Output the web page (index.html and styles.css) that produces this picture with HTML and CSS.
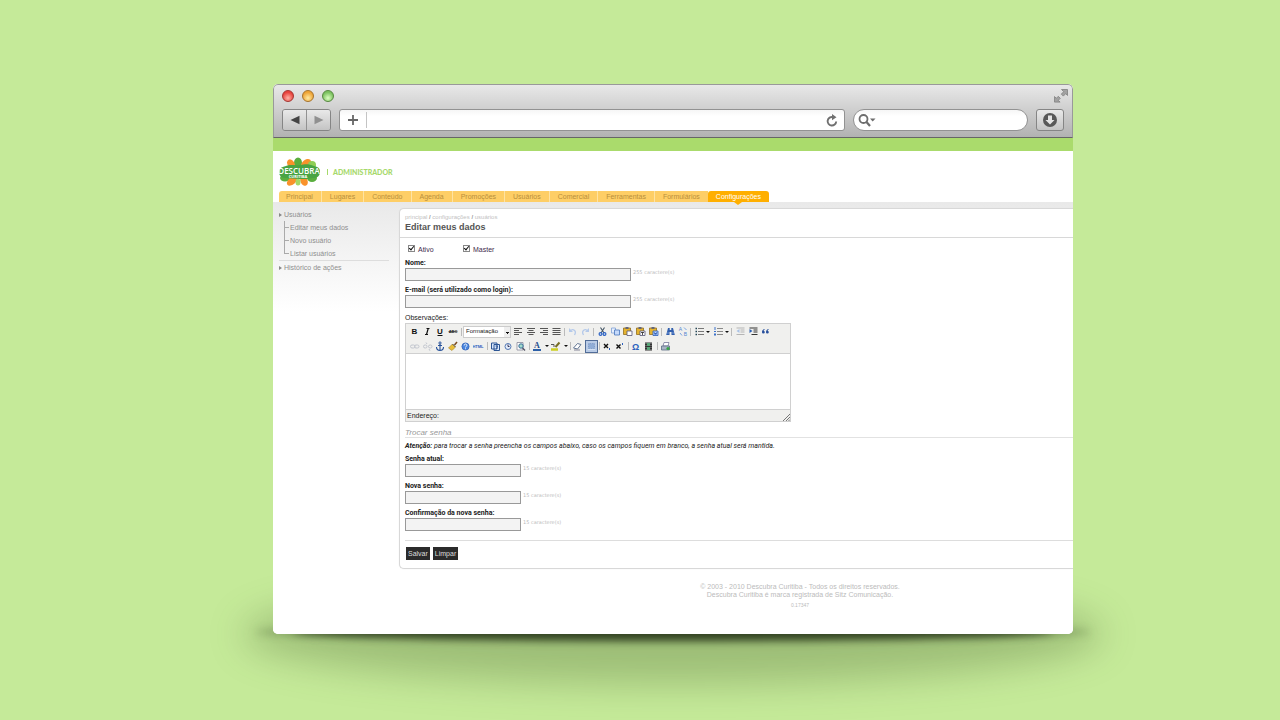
FILE: index.html
```html
<!DOCTYPE html>
<html lang="pt-BR">
<head>
<meta charset="utf-8">
<title>Descubra Curitiba - Administrador</title>
<link rel="stylesheet" href="styles.css">
</head>
<body>
<div class="stage">
<div class="shadow shadow-soft"></div>
<div class="shadow shadow-mid"></div>
<div class="shadow shadow-edge"></div>
<div class="window">
  <div class="chrome">
    <div class="titlebar">
      <span class="light red"></span><span class="light amber"></span><span class="light green"></span>
      <svg class="expand" width="16" height="16" viewBox="0 0 16 16"><path d="M8.500 1.500h6v6l-1.800-1.800-2.400 2.400-2-2 2.400-2.400zM1.500 8.500l1.800 1.800 2-2 2 2-2 2 1.800 1.800H1.500z" fill="#a2a2a2" stroke="#808080" stroke-width=".8"/></svg>
    </div>
    <div class="navbar">
      <div class="nav-pair">
        <button class="nav-btn" aria-label="Voltar"><svg width="10" height="10" viewBox="0 0 10 10"><path d="M.5 5 9.500.8v8.400z" fill="#444"/></svg></button>
        <button class="nav-btn" aria-label="Avançar"><svg width="10" height="10" viewBox="0 0 10 10"><path d="M9.500 5 .5.8v8.400z" fill="#909090"/></svg></button>
      </div>
      <div class="address">
        <button class="plain" aria-label="Adicionar"><svg width="12" height="12" viewBox="0 0 12 12"><path d="M6 1v10M1 6h10" stroke="#666" stroke-width="1.800"/></svg></button>
        <input class="address-input" type="text" aria-label="Endereço da página">
        <button class="plain" aria-label="Recarregar"><svg width="12" height="13" viewBox="0 0 12 13"><path d="M10.200 7.500A4.300 4.300 0 1 1 7 3.100" fill="none" stroke="#707070" stroke-width="1.900"/><path d="M6 0l4.500 3.200L6 6.300z" fill="#707070"/></svg></button>
      </div>
      <div class="search">
        <svg width="18" height="14" viewBox="0 0 18 14"><circle cx="5.500" cy="6" r="4" fill="none" stroke="#6d6d6d" stroke-width="1.800"/><path d="M8.500 9l3.500 4" stroke="#6d6d6d" stroke-width="2.200"/><path d="M12 5.500h5.500L14.700 8.500z" fill="#6d6d6d"/></svg>
        <input class="search-input" type="text" aria-label="Buscar">
      </div>
      <button class="download" aria-label="Downloads"><svg width="16" height="16" viewBox="0 0 16 16"><circle cx="8" cy="8" r="7" fill="#585858"/><path d="M6 3.500h4V8h2.500L8 12.500 3.500 8H6z" fill="#e4e4e4"/></svg></button>
    </div>
  </div>
  <div class="page">
    <div class="strip"></div>
    <header class="brand">
      <svg class="logo" width="44" height="30" viewBox="0 0 44 30">
        <g fill="#5aae3e"><ellipse cx="20" cy="6" rx="4" ry="5.500"/><ellipse cx="7" cy="21" rx="5" ry="3.500"/><ellipse cx="34" cy="21" rx="5" ry="4"/></g>
        <g fill="#f9922b"><ellipse cx="13" cy="7" rx="3.500" ry="5" transform="rotate(-30 13 7)"/><ellipse cx="28" cy="7" rx="6" ry="4" transform="rotate(-45 28 7)"/><ellipse cx="14" cy="24" rx="6" ry="3.500" transform="rotate(-40 14 24)"/><ellipse cx="26" cy="24" rx="3.500" ry="5" transform="rotate(-25 26 24)"/></g>
        <ellipse cx="20" cy="25" rx="2.500" ry="3.500" fill="#a5d867"/>
        <ellipse cx="34" cy="8" rx="4" ry="4" fill="#8fce55"/>
        <path d="M8 9c5-2 8 0 14-1s9-1 14 1c5 1 6 3 6 6s-2 6-7 6c-5 1-7 1-13 1s-10-1-14-1c-5 0-7-3-7-6s2-5 7-6z" fill="#49a443"/>
        <text x="21" y="17" text-anchor="middle" class="logo-name">DESCUBRA</text>
        <text x="20" y="21" text-anchor="middle" class="logo-city">CURITIBA</text>
      </svg>
      <span class="brand-bar"></span>
      <span class="brand-role">ADMINISTRADOR</span>
    </header>
    <nav class="tabs">
      <a href="#">Principal</a><a href="#">Lugares</a><a href="#">Conteúdo</a><a href="#">Agenda</a><a href="#">Promoções</a><a href="#">Usuários</a><a href="#">Comercial</a><a href="#">Ferramentas</a><a href="#">Formulários</a><a href="#" class="current">Configurações</a>
    </nav>
    <div class="columns">
      <aside class="side">
        <a href="#" class="side-top">Usuários</a>
        <div class="tree">
          <a href="#">Editar meus dados</a>
          <a href="#">Novo usuário</a>
          <a href="#">Listar usuários</a>
        </div>
        <a href="#" class="side-top ruled">Histórico de ações</a>
      </aside>
      <div class="main">
        <form class="panel">
          <div class="panel-head">
            <div class="crumbs">principal <b>/</b> configurações <b>/</b> usuários</div>
            <h1>Editar meus dados</h1>
          </div>
          <div class="panel-body">
            <div class="checks">
              <label><input type="checkbox" checked>Ativo</label>
              <label><input type="checkbox" checked>Master</label>
            </div>
            <div class="field"><label for="nome">Nome:</label><div class="line"><input id="nome" class="wide" type="text"><span class="hint">255 caractere(s)</span></div></div>
            <div class="field"><label for="email">E-mail (será utilizado como login):</label><div class="line"><input id="email" class="wide" type="text"><span class="hint">255 caractere(s)</span></div></div>
            <label class="obs" for="obs">Observações:</label>
            <div class="editor">
              <div class="tools">
                <div class="tool-row">
                  <button type="button" aria-label="Negrito"><svg viewBox="0 0 13 13"><text x="6.500" y="9" class="g b">B</text></svg></button>
                  <button type="button" aria-label="Itálico"><svg viewBox="0 0 13 13"><path d="M5.500 3.500h3M4 9.500h3M7.200 3.500 5.500 9.500" stroke="#111" stroke-width="1.200"/></svg></button>
                  <button type="button" aria-label="Sublinhado"><svg viewBox="0 0 13 13"><text x="6" y="9" class="g b">U</text><path d="M3.500 10.500h5" stroke="#111"/></svg></button>
                  <button type="button" aria-label="Tachado"><svg viewBox="0 0 13 13"><text x="6" y="8" class="g tiny">ABC</text><path d="M1.500 6.500h9" stroke="#333" stroke-width=".7"/></svg></button>
                  <i class="sep"></i>
                  <select class="format" aria-label="Formatação"><option>Formatação</option></select>
                  <button type="button" aria-label="Esquerda"><svg viewBox="0 0 13 13"><path d="M3 3.500h8M3 5.500h5M3 7.500h8M3 9.500h5" stroke="#555" stroke-width="1.200"/></svg></button>
                  <button type="button" aria-label="Centro"><svg viewBox="0 0 13 13"><path d="M3 3.500h8M4.500 5.500h5M3 7.500h8M4.500 9.500h5" stroke="#555" stroke-width="1.200"/></svg></button>
                  <button type="button" aria-label="Direita"><svg viewBox="0 0 13 13"><path d="M3 3.500h8M6 5.500h5M3 7.500h8M6 9.500h5" stroke="#555" stroke-width="1.200"/></svg></button>
                  <button type="button" aria-label="Justificar"><svg viewBox="0 0 13 13"><path d="M2.500 3.500h8M2.500 5.500h8M2.500 7.500h8M2.500 9.500h8" stroke="#555" stroke-width="1.200"/></svg></button>
                  <i class="sep"></i>
                  <button type="button" aria-label="Desfazer"><svg viewBox="0 0 13 13"><path d="M4 6c3-3 7-.5 4.500 4" fill="none" stroke="#b4c9ea" stroke-width="1.300"/><path d="M3 3v4h4z" fill="#b4c9ea"/></svg></button>
                  <button type="button" aria-label="Refazer"><svg viewBox="0 0 13 13"><path d="M9 6c-3-3-7-.5-4.500 4" fill="none" stroke="#b4c9ea" stroke-width="1.300"/><path d="M10 3v4H6z" fill="#b4c9ea"/></svg></button>
                  <i class="sep"></i>
                  <button type="button" aria-label="Recortar"><svg viewBox="0 0 13 13"><path d="M5.500 2.500 9 8M9.500 2.500 6 8" stroke="#456" stroke-width="1.100"/><circle cx="5.500" cy="9" r="1.400" fill="none" stroke="#2c62c4" stroke-width="1.200"/><circle cx="9.500" cy="9" r="1.400" fill="none" stroke="#2c62c4" stroke-width="1.200"/></svg></button>
                  <button type="button" aria-label="Copiar"><svg viewBox="0 0 13 13"><path d="M3.500 3h4v5h-4z" fill="#e8f0fd" stroke="#7fa0d4" stroke-width=".8"/><path d="M6.500 5h5v5h-5z" fill="#c6dafa" stroke="#4876bd" stroke-width=".8"/></svg></button>
                  <button type="button" aria-label="Colar"><svg viewBox="0 0 13 13"><path d="M2.500 3h7v6.500h-7z" fill="#e5b32f" stroke="#937020" stroke-width=".8"/><path d="M4.500 2h3v2h-3z" fill="#667"/><path d="M6 6h5v4.500H6z" fill="#fff" stroke="#557" stroke-width=".8"/></svg></button>
                  <button type="button" aria-label="Colar texto"><svg viewBox="0 0 13 13"><path d="M2.500 3h7v6.500h-7z" fill="#e5b32f" stroke="#937020" stroke-width=".8"/><path d="M4.500 2h3v2h-3z" fill="#667"/><path d="M6 6h5v4.500H6z" fill="#fff" stroke="#557" stroke-width=".8"/><path d="M7 7.500h3M8.500 7.500v2.500" stroke="#222" stroke-width=".8"/></svg></button>
                  <button type="button" aria-label="Colar do Word"><svg viewBox="0 0 13 13"><path d="M2.500 3h7v6.500h-7z" fill="#e5b32f" stroke="#937020" stroke-width=".8"/><path d="M4.500 2h3v2h-3z" fill="#667"/><path d="M6 6h5v4.500H6z" fill="#bcd4ff" stroke="#2b5db8" stroke-width=".8"/><path d="M7 7l1 2.500L8.500 8 9 9.500 10 7" fill="none" stroke="#1d4da8" stroke-width=".7"/></svg></button>
                  <i class="sep"></i>
                  <button type="button" aria-label="Localizar"><svg viewBox="0 0 13 13"><path d="M5 3h1.700v2h1.600V3H10l1.800 7H8.500V7h-2v3H3.200z" fill="#315fae"/><path d="M4.500 8h1M9.500 8h1" stroke="#bcd4ff"/></svg></button>
                  <button type="button" aria-label="Substituir"><svg viewBox="0 0 13 13"><text x="4.500" y="6" class="g swap">A</text><text x="9.500" y="11" class="g swap">B</text><path d="M8 2.500l2.500 2.500M4 8l2 2.500" stroke="#7aa4e4"/></svg></button>
                  <i class="sep"></i>
                  <button type="button" aria-label="Lista"><svg viewBox="0 0 13 13"><path d="M6 3.500h6M6 6.500h6M6 9.500h6" stroke="#777"/><path d="M3.500 3.500H5M3.500 6.500H5M3.500 9.500H5" stroke="#245" stroke-width="1.400"/></svg></button><button type="button" class="arrow" aria-label="Opções de lista"></button>
                  <button type="button" aria-label="Lista numerada"><svg viewBox="0 0 13 13"><path d="M6 3.500h6M6 6.500h6M6 9.500h6" stroke="#888"/><path d="M4 2v3M3 6.500h2M3 9.500h2M4 8v3" stroke="#3c72ca"/></svg></button><button type="button" class="arrow" aria-label="Opções de numeração"></button>
                  <i class="sep"></i>
                  <button type="button" aria-label="Diminuir recuo"><svg viewBox="0 0 13 13"><path d="M3.500 3h8M7.500 5h4M7.500 7h4M3.500 9.500h8" stroke="#b5b5b5"/><path d="M6.500 4v4L3.500 6z" fill="#a9c2e6"/></svg></button>
                  <button type="button" aria-label="Aumentar recuo"><svg viewBox="0 0 13 13"><path d="M3.500 3h8M7.500 5h4M7.500 7h4M5.500 9.500h6" stroke="#333"/><path d="M3.500 4v4l3-2z" fill="#2f62b4"/></svg></button>
                  <button type="button" aria-label="Citação"><svg viewBox="0 0 13 13"><path d="M6 4C4 4 3 5.500 3 7a1.400 1.400 0 1 0 1.500-1.300zM10 4c-2 0-3 1.500-3 3a1.400 1.400 0 1 0 1.500-1.300z" fill="#264f9c"/></svg></button>
                </div>
                <div class="tool-row">
                  <button type="button" aria-label="Link"><svg viewBox="0 0 13 13"><rect x="2.500" y="5" width="4.500" height="3" rx="1.500" fill="none" stroke="#c2c6ce"/><rect x="6.500" y="5" width="4.500" height="3" rx="1.500" fill="none" stroke="#c2c6ce"/></svg></button>
                  <button type="button" aria-label="Remover link"><svg viewBox="0 0 13 13"><rect x="2.500" y="5" width="3.500" height="3" rx="1.500" fill="none" stroke="#c2c6ce"/><rect x="7.500" y="5" width="3.500" height="3" rx="1.500" fill="none" stroke="#c2c6ce"/><path d="M5 2.500 6 4M8 9l1 1.800" stroke="#c2c6ce"/></svg></button>
                  <button type="button" aria-label="Âncora"><svg viewBox="0 0 13 13"><circle cx="6" cy="3" r="1.100" fill="none" stroke="#28539b"/><path d="M6 4v6.500M4 5.500h4M2.500 7c0 4.500 7 4.500 7 0" fill="none" stroke="#28539b" stroke-width="1.100"/></svg></button>
                  <button type="button" aria-label="Limpar código"><svg viewBox="0 0 13 13"><path d="M10 2 7.500 5" stroke="#7a4a20" stroke-width="1.500"/><path d="M5.500 4l3 3L5 10.500 1.500 8z" fill="#e8bd38" stroke="#a88222" stroke-width=".6"/><path d="M5.500 4l3 3" stroke="#555"/></svg></button>
                  <button type="button" aria-label="Ajuda"><svg viewBox="0 0 13 13"><circle cx="5.500" cy="6.500" r="3.600" fill="#4a86df" stroke="#2c5cb2" stroke-width=".7"/><path d="M4.200 5.500c0-2 2.600-2 2.600 0 0 1-1.300 1-1.300 2M5.500 8.300v.9" fill="none" stroke="#fff" stroke-width=".9"/></svg></button>
                  <button type="button" aria-label="HTML"><svg viewBox="0 0 13 13"><text x="5" y="8" class="g html">HTML</text></svg></button>
                  <i class="sep"></i>
                  <button type="button" aria-label="Data"><svg viewBox="0 0 13 13"><path d="M2.500 3h5.500v6H2.500zM5 4.500h5.500v6H5z" fill="#dbe8fb" stroke="#2c5594"/><path d="M6.500 6h2L7.500 9" fill="none" stroke="#2c5594" stroke-width=".9"/></svg></button>
                  <button type="button" aria-label="Hora"><svg viewBox="0 0 13 13"><circle cx="6" cy="6.500" r="3" fill="#e4edfb" stroke="#5679b3"/><path d="M6 4.500v2h1.500" fill="none" stroke="#335"/></svg></button>
                  <button type="button" aria-label="Visualizar"><svg viewBox="0 0 13 13"><path d="M2 2.500h6v7.500H2z" fill="#fff" stroke="#889" stroke-width=".8"/><circle cx="6" cy="6" r="2.200" fill="#a6dbca" stroke="#356c98"/><path d="M7.500 8l2.500 2.500" stroke="#556" stroke-width="1.400"/></svg></button>
                  <i class="sep"></i>
                  <button type="button" aria-label="Cor do texto"><svg viewBox="0 0 13 13"><text x="6" y="8" class="g serif">A</text><path d="M2 10h8" stroke="#2c5fa8" stroke-width="2"/></svg></button><button type="button" class="arrow" aria-label="Opções de cor"></button>
                  <button type="button" aria-label="Realce"><svg viewBox="0 0 13 13"><path d="M1 9.500h7" stroke="#cccf22" stroke-width="2.500"/><path d="M1 4.500h3v2.500" fill="none" stroke="#555"/><path d="M9.500 2.500 5.500 7" stroke="#786f26" stroke-width="2"/></svg></button><button type="button" class="arrow" aria-label="Opções de realce"></button>
                  <i class="sep"></i>
                  <button type="button" aria-label="Apagar formatação"><svg viewBox="0 0 13 13"><path d="M1.500 8 5.500 3.500l3.500 1L5.500 9z" fill="#fff" stroke="#657895"/><path d="M2 10h6" stroke="#889"/></svg></button>
                  <button type="button" class="pressed" aria-label="Guias"><svg viewBox="0 0 13 13"><path d="M3 3h7v6H3z" fill="#90add7" stroke="#7290c0" stroke-dasharray="1 1"/><path d="M2 10h9" stroke="#dce7f8"/></svg></button>
                  <i class="sep"></i>
                  <button type="button" aria-label="Subscrito"><svg viewBox="0 0 13 13"><path d="M3 4l4 4M7 4 3 8" stroke="#111" stroke-width="1.400"/><path d="M8.500 8v2" stroke="#2b61bd"/></svg></button>
                  <button type="button" aria-label="Sobrescrito"><svg viewBox="0 0 13 13"><path d="M2.500 4.500l4 4M6.500 4.500l-4 4" stroke="#111" stroke-width="1.400"/><path d="M8.500 3v2" stroke="#2b61bd"/></svg></button>
                  <i class="sep"></i>
                  <button type="button" aria-label="Símbolo"><svg viewBox="0 0 13 13"><text x="5.500" y="10" class="g omega">Ω</text></svg></button>
                  <button type="button" aria-label="Mídia"><svg viewBox="0 0 13 13"><path d="M2 2.500h7v8H2z" fill="#333"/><path d="M4 3h3v3H4zM4 7h3v3H4z" fill="#59a578"/><path d="M3 3v7M8 3v7" stroke="#aaa" stroke-width=".8" stroke-dasharray="1 1"/></svg></button>
                  <i class="sep"></i>
                  <button type="button" aria-label="Imprimir"><svg viewBox="0 0 13 13"><path d="M5 2.500h5L9 6H4z" fill="#fff" stroke="#779" stroke-width=".8"/><path d="M2.500 6h8v4h-8z" fill="#a8b3c5" stroke="#5c6c83" stroke-width=".8"/><circle cx="9" cy="8.500" r="1.600" fill="#35a544"/></svg></button>
                </div>
              </div>
              <textarea id="obs" class="canvas"></textarea>
              <div class="path">Endereço:<svg width="7" height="7" viewBox="0 0 7 7"><path d="M0 7 7 0M3 7l4-4M5.500 7 7 5.500" stroke="#777"/></svg></div>
            </div>
            <h2>Trocar senha</h2>
            <p class="note"><b>Atenção:</b> para trocar a senha preencha os campos abaixo, caso os campos fiquem em branco, a senha atual será mantida.</p>
            <div class="field"><label for="s1">Senha atual:</label><div class="line"><input id="s1" class="short" type="password"><span class="hint">15 caractere(s)</span></div></div>
            <div class="field"><label for="s2">Nova senha:</label><div class="line"><input id="s2" class="short" type="password"><span class="hint">15 caractere(s)</span></div></div>
            <div class="field"><label for="s3">Confirmação da nova senha:</label><div class="line"><input id="s3" class="short" type="password"><span class="hint">15 caractere(s)</span></div></div>
            <div class="actions"><button type="submit">Salvar</button><button type="reset">Limpar</button></div>
          </div>
        </form>
        <footer>
          <p>© 2003 - 2010 Descubra Curitiba - Todos os direitos reservados.</p>
          <p>Descubra Curitiba é marca registrada de Sitz Comunicação.</p>
          <p class="timing">0.17347</p>
        </footer>
      </div>
    </div>
  </div>
</div>
</div>
</body>
</html>
```

FILE: styles.css
```css
* { box-sizing: border-box; }

body {
  margin: 0;
  min-height: 100vh;
  padding: 84px 207px 86px 273px;
  background: #c5ea99;
  font: 7px/9px "Liberation Sans", Arial, sans-serif;
  color: #222;
  overflow: hidden;
}

h1, h2, p { margin: 0; }
a { color: inherit; text-decoration: none; }
button, input, select, textarea { margin: 0; padding: 0; border: 0; font: inherit; outline: 0; }
svg { display: block; flex: none; }

.stage { position: relative; }

/* Shadow cast on the backdrop below the window */
.shadow { position: absolute; border-radius: 50%; }
.shadow-soft { left: -30px; right: -30px; bottom: -50px; height: 100px; background: rgba(50, 75, 30, .27); filter: blur(18px); }
.shadow-mid { left: 20px; right: 20px; bottom: -7px; height: 20px; background: rgba(25, 35, 15, .75); filter: blur(4px); }
.shadow-edge { left: -18px; right: -18px; bottom: -3px; height: 10px; background: rgba(40, 60, 25, .5); filter: blur(4px); }

.window { position: relative; display: flex; flex-direction: column; min-height: 550px; border-radius: 5px; overflow: hidden; background: #fff; }

/* Browser chrome */
.chrome {
  height: 54px;
  padding: 0 8px;
  border: 1px solid #999;
  border-bottom-color: #666;
  border-radius: 5px 5px 0 0;
  background: linear-gradient(#e8e8e8, #d0d0d0 45%, #b2b2b2);
}
.titlebar { display: flex; align-items: center; gap: 8px; height: 22px; }
.light { width: 12px; height: 12px; border-radius: 50%; border: 1px solid; }
.red { border-color: #a33431; background: radial-gradient(circle at 50% 70%, #ffb3a6, #e8443e 65%); }
.amber { border-color: #a5722c; background: radial-gradient(circle at 50% 70%, #ffeaa2, #eea537 65%); }
.green { border-color: #55873f; background: radial-gradient(circle at 50% 70%, #dcffc0, #7cc260 65%); }
.expand { margin-left: auto; margin-right: -5px; }
.navbar { display: flex; align-items: center; height: 26px; }
.nav-pair { display: flex; width: 49px; height: 22px; border: 1px solid #858585; border-radius: 3px; overflow: hidden; }
.nav-btn, .download { display: flex; flex: 1; align-items: center; justify-content: center; background: linear-gradient(#e9e9e9, #c4c4c4); }
.nav-btn + .nav-btn { border-left: 1px solid #929292; }
.address { display: flex; flex: 1; align-items: center; height: 22px; margin: 0 8px; padding: 0 6px 0 7px; border: 1px solid #929292; border-radius: 3px; background: linear-gradient(#f6f6f6, #fff 6px); }
.plain { background: none; }
.address-input { flex: 1; min-width: 0; height: 16px; margin: 0 6px 0 7px; border-left: 1px solid #c4c4c4; background: none; }
.search { display: flex; align-items: center; width: 175px; height: 22px; padding: 0 8px 0 4px; border: 1px solid #929292; border-radius: 11px; background: linear-gradient(#f6f6f6, #fff 6px); }
.search-input { flex: 1; min-width: 0; background: none; }
.download { flex: none; width: 28px; height: 22px; margin-left: 8px; border: 1px solid #858585; border-radius: 3px; }

/* Site header */
.page { display: flex; flex: 1; flex-direction: column; }
.strip { height: 13px; background: #aadb6c; }
.brand { display: flex; align-items: center; height: 40px; padding: 2px 5px 0; }
.logo-name { font: 600 8px "Open Sans", sans-serif; fill: #fff; }
.logo-city { font: bold 4px "Open Sans", sans-serif; fill: #fff; }
.brand-bar { width: 1px; height: 6px; margin: 0 5px; background: #a6d96b; }
.brand-role { color: #a6d96b; font: 900 7px/9px Lato, sans-serif; }

.tabs { display: flex; padding-left: 6px; }
.tabs a { position: relative; height: 11px; padding: 0 8px; border-right: 1px solid #ffe3a2; background: #fece66; color: #b98f3c; line-height: 11px; }
.tabs a:first-child { padding-left: 7px; border-top-left-radius: 3px; }
.tabs a:nth-last-child(2) { border-right: 0; }
.tabs a.current { border: 0; border-radius: 3px 3px 0 0; background: #ffaf00; color: #fff; }
.tabs .current::after { content: ""; position: absolute; left: 50%; top: 100%; margin-left: -4px; border: 4px solid transparent; border-top: 3px solid #ffaf00; border-bottom: 0; }

.columns { display: flex; flex: 1; padding-top: 6px; background: linear-gradient(#e9e9e9, #fff 110px); }

/* Side menu */
.side { display: flex; flex-direction: column; width: 126px; padding: 0 10px 0 6px; color: #8e8e8e; }
.side a { line-height: 13px; }
.side-top { display: flex; align-items: center; }
.side-top::before { content: ""; margin-right: 2px; border: 2px solid transparent; border-left: 3px solid #888; border-right: 0; }
.tree { display: flex; flex-direction: column; padding-left: 5px; }
.tree a { position: relative; padding-left: 6px; }
.tree a::before { content: ""; position: absolute; left: 0; top: 0; width: 4px; height: 6px; border: solid #aaa; border-width: 0 0 1px 1px; }
.tree a:not(:last-child)::after { content: ""; position: absolute; left: 0; top: 6px; height: 7px; border-left: 1px solid #aaa; }
.ruled { border-top: 1px solid #ddd; }

/* Form panel */
.main { flex: 1; min-width: 0; }
.panel { border: 1px solid #d8d8d8; border-right: 0; border-radius: 5px 0 0 5px; background: #fff; box-shadow: 0 0 1px #ddd; }
.panel-head { padding: 4px 5px 4px; border-bottom: 1px solid #d8d8d8; }
.crumbs { color: #c2c2c2; font-size: 6px; line-height: 8px; }
.crumbs b { color: #999; }
h1 { color: #555; font-size: 9px; line-height: 12px; }
.panel-body { padding: 5px 0 8px 5px; }
.checks { display: flex; margin-bottom: 3px; }
.checks label { display: flex; align-items: center; gap: 3px; width: 55px; height: 12px; color: #402a4c; }
.checks input { appearance: none; width: 7px; height: 7px; margin: 0 0 2px 3px; border: 1px solid #888; background: #fff; position: relative; }
.checks input:checked::after { content: ""; position: absolute; left: 1px; top: -1px; width: 2px; height: 4px; border: solid #111; border-width: 0 1px 1px 0; transform: rotate(40deg); }
.field { margin-bottom: 4px; }
.field label { display: block; font: bold 7px/10px Roboto, Arial, sans-serif; }
.line { display: flex; align-items: flex-start; gap: 2px; }
.line input { height: 13px; border: 1px solid #999; background: #f3f3f3; }
.wide { width: 226px; }
.short { width: 116px; }
.hint { color: #bbb; font: 5px/9px "DejaVu Sans", sans-serif; }
.obs { display: block; line-height: 11px; }

.editor { width: 386px; max-width: 100%; border: 1px solid #d0d0d0; }
.tools { padding: 0 2px; border-bottom: 1px solid #d0d0d0; background: #f0f0ee; }
.tool-row { display: flex; align-items: center; height: 14px; }
.tool-row:first-child { height: 15px; }
.tool-row button { width: 13px; height: 13px; flex: none; background: none; }
.tool-row button svg { width: 13px; height: 13px; }
.tool-row .sep { flex: none; width: 1px; height: 8px; margin: 0 1px; background: #bbb; }
.tool-row .arrow { width: 6px; height: 13px; }
.arrow::before { content: ""; display: block; width: 0; height: 0; margin: 0 auto; border: 2px solid transparent; border-top-color: #111; border-bottom: 0; }
.tool-row .pressed { background: #b9cbe6; border: 1px solid #526d98; }
.tool-row .pressed svg { width: 11px; height: 11px; }
.format { appearance: none; width: 48px; height: 12px; padding-left: 2px; border: 1px solid #ccc; color: #222; background: linear-gradient(#111, #111) 42px 5px / 3px 1px no-repeat, linear-gradient(#111, #111) 43px 6px / 1px 1px no-repeat, linear-gradient(90deg, #fff 40px, #eee 40px); font-size: 6px; }
.g { text-anchor: middle; font: 7px "Liberation Sans", sans-serif; fill: #111; }
.g.b { font-weight: bold; font-size: 8px; }
.g.tiny { font-size: 4px; font-weight: bold; }
.g.html { font-size: 4px; font-weight: bold; fill: #2b61bd; }
.g.swap { font-size: 5px; fill: #5584d0; }
.g.serif { font: bold 8px "Liberation Serif", serif; fill: #234a8c; }
.g.omega { font-weight: bold; font-size: 9px; fill: #2b61bd; }
.canvas { display: block; width: 100%; height: 55px; resize: none; background: #fff; }
.path { display: flex; justify-content: space-between; align-items: flex-end; height: 12px; padding-left: 1px; border-top: 1px solid #d0d0d0; background: #f0f0ee; line-height: 11px; }

h2 { margin-top: 6px; border-bottom: 1px solid #e2e2e2; color: #999; font-size: 8px; font-style: italic; font-weight: normal; line-height: 9px; }
.note { padding: 3px 0; font: italic 7px/10px Roboto, Arial, sans-serif; }
.actions { display: flex; gap: 3px; margin-top: 9px; padding: 6px 0 0 1px; border-top: 1px solid #ddd; }
.actions button { height: 13px; padding: 0 2px; background: #2b2b2b; color: #ddd; }

footer { padding: 14px 0 20px 128px; color: #bbb; text-align: center; line-height: 8px; }
.timing { padding-top: 2px; font-size: 5px; }
```
